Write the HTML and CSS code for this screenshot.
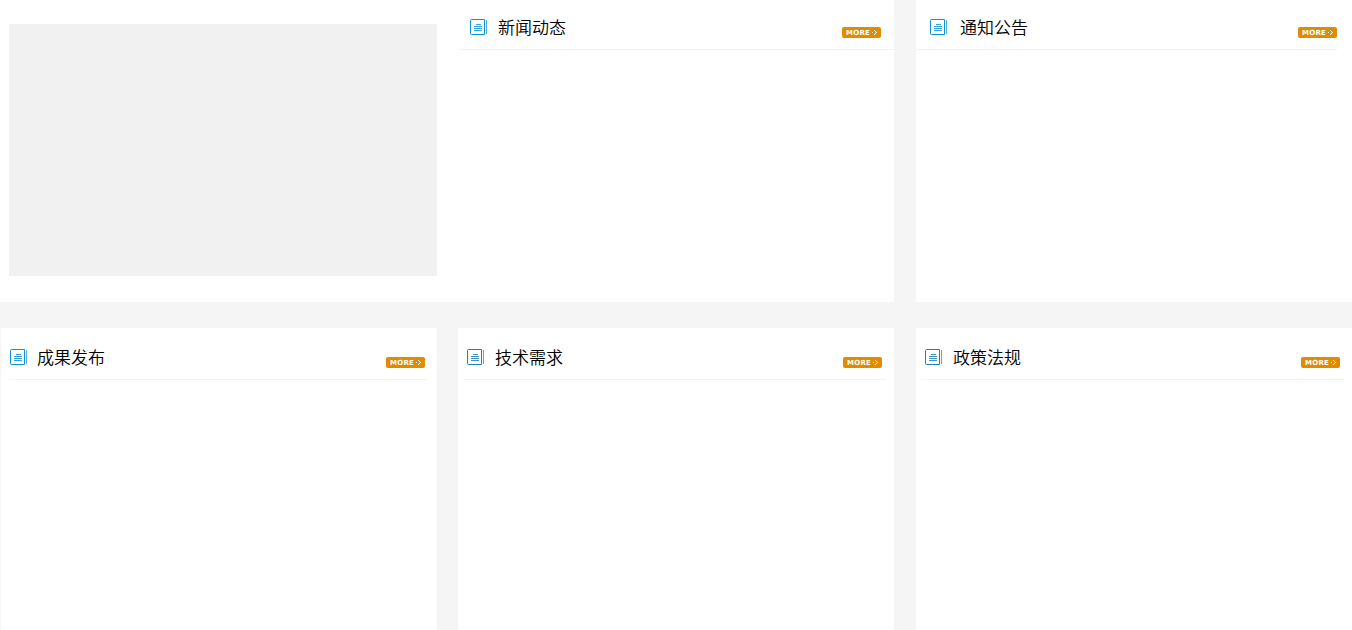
FILE: index.html
```html
<!DOCTYPE html>
<html lang="zh-CN">
<head>
<meta charset="utf-8">
<title>首页</title>
<link rel="stylesheet" href="styles.css">
</head>
<body>
<svg class="defs" width="0" height="0" aria-hidden="true">
  <symbol id="doc" viewBox="0 0 17 17">
    <path d="M14.500 .5H1.700Q.5 .5 .5 1.700V14.300Q.5 15.500 1.700 15.500H14.500V.5" fill="none" stroke="currentColor"/>
    <path d="M16.500 1V15" fill="none" stroke="currentColor" opacity=".7"/>
    <path d="M6 5.500H11M4 7.500H12M4 9.500H12M4 11.500H12" fill="none" stroke="currentColor" opacity=".85"/>
  </symbol>
</svg>
<main class="page">
  <section class="row row-top">
    <div class="lead">
      <div class="slide"></div>
      <article class="panel panel-news">
        <header class="head">
          <svg class="ico ico-bright" width="17" height="17"><use href="#doc"/></svg>
          <h2 class="title">新闻动态</h2>
          <a class="more"><span class="more-text">MORE</span><svg class="arrow" width="5" height="5" viewBox="0 0 5 5"><path d="M0 2h1v1H0zM2 0h1v1H2zM3 1h1v1H3zM4 2h1v1H4zM3 3h1v1H3zM2 4h1v1H2z" fill="#fff"/></svg></a>
        </header>
      </article>
    </div>
    <article class="panel panel-notice">
      <header class="head">
        <svg class="ico ico-bright" width="17" height="17"><use href="#doc"/></svg>
        <h2 class="title">通知公告</h2>
        <a class="more"><span class="more-text">MORE</span><svg class="arrow" width="5" height="5" viewBox="0 0 5 5"><path d="M0 2h1v1H0zM2 0h1v1H2zM3 1h1v1H3zM4 2h1v1H4zM3 3h1v1H3zM2 4h1v1H2z" fill="#fff"/></svg></a>
      </header>
    </article>
  </section>
  <section class="row row-bottom">
    <article class="panel panel-a">
      <header class="head">
        <svg class="ico ico-bright" width="17" height="17"><use href="#doc"/></svg>
        <h2 class="title">成果发布</h2>
        <a class="more"><span class="more-text">MORE</span><svg class="arrow" width="5" height="5" viewBox="0 0 5 5"><path d="M0 2h1v1H0zM2 0h1v1H2zM3 1h1v1H3zM4 2h1v1H4zM3 3h1v1H3zM2 4h1v1H2z" fill="#fff"/></svg></a>
      </header>
    </article>
    <article class="panel panel-b">
      <header class="head">
        <svg class="ico ico-mid" width="17" height="17"><use href="#doc"/></svg>
        <h2 class="title">技术需求</h2>
        <a class="more"><span class="more-text">MORE</span><svg class="arrow" width="5" height="5" viewBox="0 0 5 5"><path d="M0 2h1v1H0zM2 0h1v1H2zM3 1h1v1H3zM4 2h1v1H4zM3 3h1v1H3zM2 4h1v1H2z" fill="#fff"/></svg></a>
      </header>
    </article>
    <article class="panel panel-c">
      <header class="head">
        <svg class="ico ico-mid" width="17" height="17"><use href="#doc"/></svg>
        <h2 class="title">政策法规</h2>
        <a class="more"><span class="more-text">MORE</span><svg class="arrow" width="5" height="5" viewBox="0 0 5 5"><path d="M0 2h1v1H0zM2 0h1v1H2zM3 1h1v1H3zM4 2h1v1H4zM3 3h1v1H3zM2 4h1v1H2z" fill="#fff"/></svg></a>
      </header>
    </article>
  </section>
</main>
</body>
</html>
```
FILE: styles.css
```css
html, body {
  margin: 0;
  height: 630px;
  overflow: hidden;
  background: #f5f5f5;
  font-family: "Noto Sans CJK SC", "Liberation Sans", sans-serif;
}
.defs { display: block; }
.page { display: flex; flex-direction: column; gap: 26px; }
.row { display: flex; }
.row-top { height: 302px; gap: 22px; }
.row-bottom { height: 302px; }
.lead { width: 894px; display: flex; background: #fff; }
.slide { width: 428px; height: 252px; margin: 24px 22px 0 9px; background: #f1f1f1; flex: none; }
.panel { background: #fff; }
.panel-news { width: 435px; }
.panel-notice { width: 436px; padding-right: 15px; box-sizing: border-box; }
.panel-a { width: 436px; margin-left: 1px; padding: 0 10px 0 8px; box-sizing: border-box; }
.panel-b { width: 436px; margin-left: 21px; padding: 0 8px 0 5px; box-sizing: border-box; }
.panel-c { width: 436px; margin-left: 22px; padding: 0 8px 0 5px; box-sizing: border-box; }
.head {
  display: flex;
  height: 49px;
  border-bottom: 1px solid #f3f3f3;
  box-sizing: content-box;
}
.ico { flex: none; margin-top: 19px; }
.ico-bright { color: #0f8fd6; }
.ico-mid { color: #1f7fb8; }
.title {
  margin: 15px 0 0 11px;
  font-size: 17px;
  line-height: 24px;
  font-weight: 350;
  color: #000;
}
.more {
  display: flex;
  align-items: center;
  gap: 2px;
  margin: 27px 0 0 auto;
  padding-left: 4px;
  box-sizing: border-box;
  width: 39px;
  height: 11px;
  border-radius: 2px;
  background: #e08c00;
  color: #fff;
}
.more-text {
  width: 24px;
  padding-top: 1px;
  font: 700 7px/10px "DejaVu Sans", sans-serif;
  letter-spacing: .25px;
  white-space: nowrap;
  overflow: hidden;
}
.arrow { flex: none; }
.panel-news .head { padding: 0 13px 0 11px; }
.panel-notice .head { padding-left: 14px; }
.panel-notice .title { margin-left: 13px; }
.panel-a .head { padding: 0 2px 0 1px; }
.panel-b .head { padding: 0 4px 0 4px; }
.panel-c .head { padding: 0 4px 0 4px; }
.panel-a .head, .panel-b .head, .panel-c .head { height: 51px; }
.panel-a .ico, .panel-b .ico, .panel-c .ico { margin-top: 21px; }
.panel-a .title, .panel-b .title, .panel-c .title { margin: 17px 0 0 11px; }
.panel-a .title { margin-left: 10px; }
.panel-a .more, .panel-b .more, .panel-c .more { margin-top: 29px; }
```
